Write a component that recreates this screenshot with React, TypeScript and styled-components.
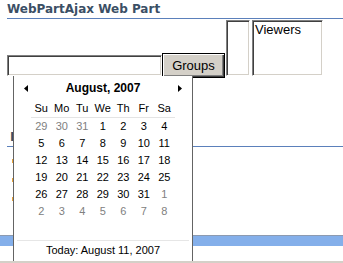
import React from 'react';
import styled, { createGlobalStyle } from 'styled-components';

const GlobalStyle = createGlobalStyle`
  html, body { margin: 0; padding: 0; background: #fff; }
  body { font-family: "Liberation Sans", Arial, sans-serif; overflow: hidden; }
`;

const Page = styled.div`
  position: relative;
  width: 343px;
  height: 263px;
  overflow: hidden;
  background: #fff;
`;

const WebPart = styled.section<{ $top?: number }>`
  margin: ${p => p.$top ?? 0}px 0 0 7px;
`;

const TitleBar = styled.div<{ $indent?: number }>`
  height: 16px;
  padding: 1px 0 1px ${p => p.$indent ?? 0}px;
  line-height: 16px;
  border-bottom: 1px solid #5b80bb;
  font-family: "DejaVu Sans", Verdana, sans-serif;
  font-weight: bold;
  font-size: 12px;
  color: #3b4f65;
  white-space: nowrap;
`;

const Controls = styled.div`
  display: flex;
  align-items: flex-end;
  margin-top: 1px;
`;

const TextBox = styled.input`
  box-sizing: border-box;
  width: 155px;
  height: 21px;
  margin: 0;
  padding: 0 2px;
  border-style: solid;
  border-width: 1px;
  border-color: #808080 #fff #fff #808080;
  box-shadow: inset 1px 1px 0 #404040, inset -1px -1px 0 #d4d0c8;
  background: #fff;
  outline: none;
  font: 13px "Liberation Sans", Arial, sans-serif;
`;

const Button = styled.button`
  box-sizing: border-box;
  width: 63px;
  height: 25px;
  margin: 0 0 -2px 0;
  padding: 0;
  border: 1px solid #000;
  box-shadow: inset 1px 1px 0 #fff, inset -1px -1px 0 #404040, inset -2px -2px 0 #808080;
  background: #d4d0c8;
  color: #000;
  font: 13px "Liberation Sans", Arial, sans-serif;
  text-align: center;
`;

const ListBox = styled.div<{ $width: number; $gap: number }>`
  box-sizing: border-box;
  width: ${p => p.$width}px;
  height: 56px;
  margin-left: ${p => p.$gap}px;
  padding: 1px 2px 0 2px;
  border-style: solid;
  border-width: 1px;
  border-color: #808080 #fff #fff #808080;
  box-shadow: inset 1px 1px 0 #404040, inset -1px -1px 0 #d4d0c8;
  background: #fff;
  font: 13px/15px "Liberation Sans", Arial, sans-serif;
  color: #000;
`;

const LinkList = styled.ul`
  list-style: none;
  margin: 0;
  padding: 4px 0 0 5px;
`;

const LinkItem = styled.li`
  display: flex;
  align-items: center;
  height: 19px;
`;

const Bullet = styled.span`
  width: 4px;
  height: 4px;
  background: #e8a23a;
`;

const Band = styled.div`
  margin-top: 27px;
  height: 10px;
  border-top: 1px solid #8c9ab0;
  background: #84afea;
`;

const FrameEdge = styled.div`
  position: absolute;
  left: 0;
  right: 0;
  bottom: 0;
  height: 2px;
  background: #d4d0c8;
  z-index: 2;
`;

const Calendar = styled.div`
  position: absolute;
  left: 13px;
  top: 76px;
  width: 180px;
  height: 200px;
  box-sizing: border-box;
  border: 1px solid #646464;
  border-top: 0;
  background: #fff;
  padding-top: 2px;
  font-family: "Liberation Sans", Tahoma, sans-serif;
  font-size: 11px;
  color: #000;
  z-index: 1;
`;

const CalHeader = styled.div`
  display: flex;
  align-items: center;
  justify-content: space-between;
  height: 20px;
  padding: 0 10px;
`;

const MonthTitle = styled.div`
  font-weight: bold;
  font-size: 12px;
  line-height: 20px;
`;

const Grid = styled.div<{ $head?: boolean }>`
  display: grid;
  grid-template-columns: repeat(7, 20.5px);
  margin: ${p => (p.$head ? '2px' : '0')} 0 0 17px;
  width: 143.5px;
  border-bottom: ${p => (p.$head ? '1px solid #e4e4e4' : '0')};
`;

const Cell = styled.div<{ $muted?: boolean }>`
  height: 17px;
  line-height: 17px;
  text-align: center;
  color: ${p => (p.$muted ? '#808080' : '#000')};
  white-space: nowrap;
`;

const CalFooter = styled.div`
  margin: 20px 3px 0 3px;
  padding-top: 1px;
  border-top: 1px solid #e6e6e6;
  line-height: 17px;
  text-align: center;
`;

const Arrow = ({ dir }: { dir: 'left' | 'right' }) => (
  <svg width="4" height="7" viewBox="0 0 4 7" style={{ display: 'block' }}>
    <polygon points={dir === 'left' ? '4,0 4,7 0,3.5' : '0,0 0,7 4,3.5'} fill="#000" />
  </svg>
);

type Day = { n: number; muted?: boolean };

const buildDays = (): Day[] => {
  const days: Day[] = [];
  [29, 30, 31].forEach(n => days.push({ n, muted: true }));
  for (let n = 1; n <= 31; n++) days.push({ n });
  for (let n = 1; n <= 8; n++) days.push({ n, muted: true });
  return days;
};

const dayNames = ['Su', 'Mo', 'Tu', 'We', 'Th', 'Fr', 'Sa'];

export default function App() {
  const days = buildDays();
  return (
    <>
      <GlobalStyle />
      <Page>
        <WebPart>
          <TitleBar>WebPartAjax Web Part</TitleBar>
          <Controls>
            <TextBox type="text" defaultValue="" />
            <Button>Groups</Button>
            <ListBox $width={24} $gap={1} />
            <ListBox $width={71} $gap={2}>Viewers</ListBox>
          </Controls>
        </WebPart>
        <WebPart $top={52}>
          <TitleBar $indent={3}>I</TitleBar>
          <LinkList>
            {[0, 1, 2].map(i => (
              <LinkItem key={i}><Bullet /></LinkItem>
            ))}
          </LinkList>
        </WebPart>
        <Band />
        <Calendar>
          <CalHeader>
            <Arrow dir="left" />
            <MonthTitle>August, 2007</MonthTitle>
            <Arrow dir="right" />
          </CalHeader>
          <Grid $head>
            {dayNames.map(d => (
              <Cell key={d}>{d}</Cell>
            ))}
          </Grid>
          <Grid>
            {days.map((d, i) => (
              <Cell key={i} $muted={d.muted}>{d.n}</Cell>
            ))}
          </Grid>
          <CalFooter>Today: August 11, 2007</CalFooter>
        </Calendar>
        <FrameEdge />
      </Page>
    </>
  );
}
